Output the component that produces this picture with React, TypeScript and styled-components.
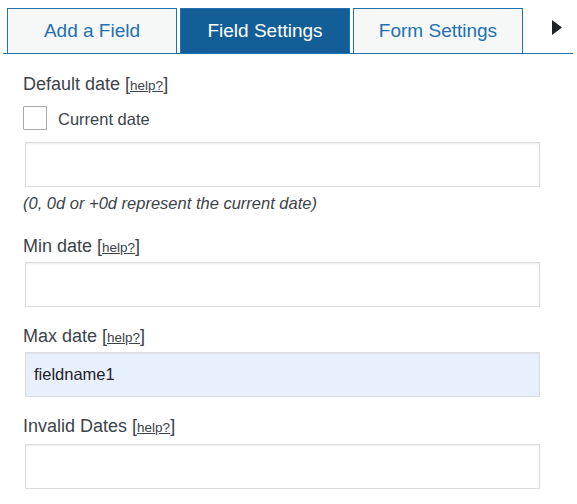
import React from "react";
import styled, { createGlobalStyle } from "styled-components";

const Global = createGlobalStyle`
  html, body { margin: 0; padding: 0; background: #fff; }
  body { font-family: "Liberation Sans", Arial, sans-serif; color: #3c434a; }
`;

const Page = styled.div`
  width: 577px;
  padding-top: 8px;
`;

const TabBar = styled.div`
  display: flex;
  align-items: flex-end;
  height: 45px;
  margin: 0 4px 0 3px;
  padding-left: 4px;
  border-bottom: 1px solid #2271b1;
`;

const Tab = styled.div<{ $active?: boolean }>`
  box-sizing: border-box;
  width: 170px;
  height: 45px;
  margin-right: 3px;
  display: flex;
  align-items: center;
  justify-content: center;
  border: 1px solid #2271b1;
  border-bottom: none;
  background: ${(p) => (p.$active ? "#135e96" : "#f6f7f7")};
  color: ${(p) => (p.$active ? "#ffffff" : "#2271b1")};
  font-size: 19px;
  cursor: pointer;
`;

const Arrow = styled.svg`
  margin-left: 26px;
  margin-bottom: 18px;
  display: block;
`;

const Form = styled.div`
  padding: 20px 37px 0 23px;
`;

const Field = styled.div<{ $gap?: number }>`
  margin-top: ${(p) => p.$gap ?? 0}px;
`;

const Label = styled.div`
  font-size: 18px;
  line-height: 21px;
  height: 21px;
  color: #3c434a;
`;

const Help = styled.a`
  font-size: 13.5px;
  line-height: 1;
  color: #3c434a;
  text-decoration: underline;
`;

const CheckRow = styled.label`
  display: flex;
  align-items: flex-start;
  margin-top: 11px;
`;

const CheckBox = styled.span`
  box-sizing: border-box;
  width: 24px;
  height: 24px;
  border: 1px solid #a7aaad;
  border-radius: 1px;
  background: #fff;
  margin-right: 11px;
`;

const CheckText = styled.span`
  font-size: 16.5px;
  line-height: 22px;
  padding-top: 2px;
  color: #3c434a;
`;

const Input = styled.div<{ $filled?: boolean; $top?: number }>`
  box-sizing: border-box;
  width: 515px;
  height: 45px;
  margin: ${(p) => p.$top ?? 5}px 0 0 2px;
  border: 1px solid #dcdcde;
  box-shadow: inset 0 1px 2px rgba(0, 0, 0, 0.07);
  background: ${(p) => (p.$filled ? "#e8f0fe" : "#fff")};
  display: flex;
  align-items: center;
  padding-left: 8px;
  font-size: 16.5px;
  color: #1d2327;
`;

const Note = styled.div`
  margin-top: 6px;
  font-size: 16.5px;
  line-height: 20px;
  font-style: italic;
  color: #3c434a;
`;

const HelpLabel: React.FC<{ text: string }> = ({ text }) => (
  <Label>
    {text} [<Help>help?</Help>]
  </Label>
);

export default function App() {
  return (
    <Page>
      <Global />
      <TabBar>
        <Tab>Add a Field</Tab>
        <Tab $active>Field Settings</Tab>
        <Tab>Form Settings</Tab>
        <Arrow width="10" height="15" viewBox="0 0 10 15">
          <path d="M0 0 L10 7.5 L0 15 Z" fill="#1d2327" />
        </Arrow>
      </TabBar>
      <Form>
        <Field>
          <HelpLabel text="Default date" />
          <CheckRow>
            <CheckBox />
            <CheckText>Current date</CheckText>
          </CheckRow>
          <Input $top={12} />
          <Note>(0, 0d or +0d represent the current date)</Note>
        </Field>
        <Field $gap={23}>
          <HelpLabel text="Min date" />
          <Input />
        </Field>
        <Field $gap={19}>
          <HelpLabel text="Max date" />
          <Input $filled>fieldname1</Input>
        </Field>
        <Field $gap={19}>
          <HelpLabel text="Invalid Dates" />
          <Input $top={7} />
        </Field>
      </Form>
    </Page>
  );
}
